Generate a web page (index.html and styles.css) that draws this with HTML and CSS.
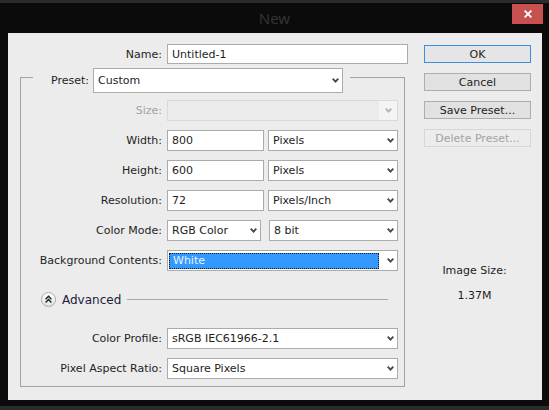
FILE: index.html
```html
<!DOCTYPE html>
<html>
<head>
<meta charset="utf-8">
<title>New</title>
<link rel="stylesheet" href="styles.css">
</head>
<body>
<div class="window">
  <div class="titlebar">
    <div class="tb-side"></div>
    <div class="tb-title">New</div>
    <div class="tb-side tb-right">
      <div class="close">
        <svg width="8" height="8" viewBox="0 0 8 8"><path d="M0.6 0.6 L7.4 7.4 M7.4 0.6 L0.6 7.4" stroke="#fff" stroke-width="1.8" fill="none"/></svg>
      </div>
    </div>
  </div>
  <div class="dialog">
    <div class="main">
      <div class="row name-row">
        <label class="lbl lbl-name">Name:</label>
        <div class="input w-name">Untitled-1</div>
      </div>
      <div class="group">
        <div class="preset-row">
          <label class="lbl-plain">Preset:</label>
          <div class="select w-preset tall"><span>Custom</span><svg class="chev" width="7" height="5" viewBox="0 0 7 5"><polyline points="0.7,0.7 3.5,3.6 6.3,0.7" fill="none" stroke="#4a4a4a" stroke-width="1.9"/></svg></div>
        </div>
        <div class="row r-size">
          <label class="lbl disabled-text">Size:</label>
          <div class="select disabled w-full"><span class="sel-text"></span><span class="chev-cell"><svg class="chev" width="7" height="5" viewBox="0 0 7 5"><polyline points="0.7,0.7 3.5,3.6 6.3,0.7" fill="none" stroke="#b4b4b4" stroke-width="1.9"/></svg></span></div>
        </div>
        <div class="row">
          <label class="lbl">Width:</label>
          <div class="input w-num">800</div>
          <div class="select w-unit"><span>Pixels</span><svg class="chev" width="7" height="5" viewBox="0 0 7 5"><polyline points="0.7,0.7 3.5,3.6 6.3,0.7" fill="none" stroke="#4a4a4a" stroke-width="1.9"/></svg></div>
        </div>
        <div class="row">
          <label class="lbl">Height:</label>
          <div class="input w-num">600</div>
          <div class="select w-unit"><span>Pixels</span><svg class="chev" width="7" height="5" viewBox="0 0 7 5"><polyline points="0.7,0.7 3.5,3.6 6.3,0.7" fill="none" stroke="#4a4a4a" stroke-width="1.9"/></svg></div>
        </div>
        <div class="row">
          <label class="lbl">Resolution:</label>
          <div class="input w-num">72</div>
          <div class="select w-unit"><span>Pixels/Inch</span><svg class="chev" width="7" height="5" viewBox="0 0 7 5"><polyline points="0.7,0.7 3.5,3.6 6.3,0.7" fill="none" stroke="#4a4a4a" stroke-width="1.9"/></svg></div>
        </div>
        <div class="row">
          <label class="lbl">Color Mode:</label>
          <div class="select w-mode"><span>RGB Color</span><svg class="chev" width="7" height="5" viewBox="0 0 7 5"><polyline points="0.7,0.7 3.5,3.6 6.3,0.7" fill="none" stroke="#4a4a4a" stroke-width="1.9"/></svg></div>
          <div class="select w-bit"><span>8 bit</span><svg class="chev" width="7" height="5" viewBox="0 0 7 5"><polyline points="0.7,0.7 3.5,3.6 6.3,0.7" fill="none" stroke="#4a4a4a" stroke-width="1.9"/></svg></div>
        </div>
        <div class="row">
          <label class="lbl">Background Contents:</label>
          <div class="select w-full focus"><span class="hl">White</span><svg class="chev" width="7" height="5" viewBox="0 0 7 5"><polyline points="0.7,0.7 3.5,3.6 6.3,0.7" fill="none" stroke="#4a4a4a" stroke-width="1.9"/></svg></div>
        </div>
        <div class="adv-row">
          <span class="adv-btn"><svg width="15" height="15" viewBox="0 0 15 15"><defs><linearGradient id="g" x1="0" y1="0" x2="0" y2="1"><stop offset="0" stop-color="#ffffff"/><stop offset="1" stop-color="#e4e4e4"/></linearGradient></defs><circle cx="7.5" cy="7.5" r="7" fill="url(#g)" stroke="#a9a9a9" stroke-width="1"/><polyline points="4.6,7.2 7.5,4.3 10.4,7.2" fill="none" stroke="#1e1e1e" stroke-width="1.4"/><polyline points="4.6,10.4 7.5,7.5 10.4,10.4" fill="none" stroke="#1e1e1e" stroke-width="1.4"/></svg></span>
          <span class="adv-text">Advanced</span>
          <span class="adv-line"></span>
        </div>
        <div class="row r-profile">
          <label class="lbl">Color Profile:</label>
          <div class="select w-full"><span>sRGB IEC61966-2.1</span><svg class="chev" width="7" height="5" viewBox="0 0 7 5"><polyline points="0.7,0.7 3.5,3.6 6.3,0.7" fill="none" stroke="#4a4a4a" stroke-width="1.9"/></svg></div>
        </div>
        <div class="row">
          <label class="lbl">Pixel Aspect Ratio:</label>
          <div class="select w-full"><span>Square Pixels</span><svg class="chev" width="7" height="5" viewBox="0 0 7 5"><polyline points="0.7,0.7 3.5,3.6 6.3,0.7" fill="none" stroke="#4a4a4a" stroke-width="1.9"/></svg></div>
        </div>
      </div>
    </div>
    <div class="side">
      <div class="btn btn-ok">OK</div>
      <div class="btn">Cancel</div>
      <div class="btn">Save Preset...</div>
      <div class="btn btn-disabled">Delete Preset...</div>
      <div class="info-label">Image Size:</div>
      <div class="info-value">1.37M</div>
    </div>
  </div>
</div>
</body>
</html>
```

FILE: styles.css
```css
html, body {
  margin: 0;
  padding: 0;
  background: #0b0b0b;
}
.window {
  width: 549px;
  height: 410px;
  box-sizing: border-box;
  background: #0b0b0b;
  border-top: 3px solid #2b2b2b;
  border-bottom: 4px solid #2b2b2b;
  font-family: "DejaVu Sans", Verdana, sans-serif;
  font-size: 11px;
  color: #1e1e1e;
}
.titlebar {
  height: 30px;
  box-sizing: border-box;
  padding: 1px 6px 0 6px;
  display: grid;
  grid-template-columns: 1fr auto 1fr;
}
.tb-title {
  font-family: "Noto Sans", "Open Sans", sans-serif;
  font-size: 15px;
  color: #333333;
  line-height: 29px;
}
.tb-right {
  display: flex;
  justify-content: flex-end;
}
.close {
  width: 31px;
  height: 20px;
  background: #c75050;
  display: flex;
  align-items: center;
  justify-content: center;
}
.dialog {
  margin: 0 7px 0 8px;
  height: 367px;
  background: #ececec;
  box-sizing: border-box;
  padding-top: 11px;
  display: flex;
}
.main {
  margin-left: 12px;
  width: 385px;
}
.row {
  display: flex;
  align-items: center;
  height: 21px;
  margin-top: 9px;
}
.name-row {
  margin-top: 0;
  height: 20px;
}
.lbl {
  width: 141px;
  flex: none;
  text-align: right;
  margin-right: 5px;
  white-space: nowrap;
}
.lbl-name {
  width: 142px;
}
.disabled-text {
  color: #a3a3a3;
}
.input, .select {
  box-sizing: border-box;
  height: 100%;
  border: 1px solid #ababab;
  background: #fff;
  display: flex;
  align-items: center;
  white-space: nowrap;
  flex: none;
}
.input {
  padding-left: 4px;
}
.select {
  justify-content: space-between;
  padding: 0 3px 0 4px;
}
.chev {
  display: block;
  flex: none;
}
.w-name { width: 241px; }
.w-full { width: 231px; }
.w-num { width: 97px; margin-right: 4px; }
.w-unit { width: 130px; }
.w-mode { width: 94px; margin-right: 8px; }
.w-bit { width: 129px; }
.w-preset { width: 250px; height: 25px; }
.group {
  margin-top: 13px;
  width: 385px;
  box-sizing: border-box;
  border: 1px solid #a2a2a2;
  padding: 0 6px 7px 0;
}
.preset-row {
  margin-top: -10px;
  margin-left: 12px;
  width: 317px;
  height: 25px;
  box-sizing: border-box;
  background: #ececec;
  display: flex;
  align-items: center;
  justify-content: flex-end;
  gap: 4px;
  padding-right: 7px;
}
.r-size {
  margin-top: 7px;
}
.select.disabled {
  border-color: #d9d9d9;
  background: #ebebeb;
  padding: 0;
}
.sel-text {
  flex: 1;
}
.chev-cell {
  width: 18px;
  height: 100%;
  background: #f4f4f4;
  display: flex;
  align-items: center;
  justify-content: center;
}
.select.focus {
  padding-left: 1px;
}
.hl {
  width: 210px;
  height: 16px;
  box-sizing: border-box;
  background: #3399ff;
  border: 1px dotted #1a1a1a;
  color: #eaf2ff;
  padding-left: 3px;
  line-height: 14px;
  margin-top: 1px;
}
.adv-row {
  display: flex;
  align-items: center;
  height: 15px;
  margin-top: 21px;
}
.adv-btn {
  margin-left: 20px;
  width: 15px;
  height: 15px;
  display: block;
}
.adv-btn svg {
  display: block;
}
.adv-text {
  margin-left: 6px;
  font-size: 12px;
  color: #1c1c3a;
}
.adv-line {
  flex: 1;
  height: 1px;
  background: #aaaaaa;
  margin: 0 10px 0 6px;
}
.r-profile {
  margin-top: 21px;
}
.side {
  margin-left: 19px;
  width: 107px;
  padding-top: 1px;
}
.btn {
  height: 18px;
  box-sizing: border-box;
  border: 1px solid #adadad;
  background: #e1e1e1;
  display: flex;
  align-items: center;
  justify-content: center;
  margin-bottom: 10px;
  white-space: nowrap;
}
.btn-ok {
  border-color: #3d8ee0;
  background: #e5e5e5;
}
.btn-disabled {
  border-color: #d6d6d6;
  background: #ececec;
  color: #a2a2a2;
  margin-bottom: 0;
}
.info-label, .info-value {
  line-height: 14px;
  text-align: center;
  padding-right: 6px;
}
.info-label {
  margin-top: 117px;
}
.info-value {
  margin-top: 11px;
}
```
